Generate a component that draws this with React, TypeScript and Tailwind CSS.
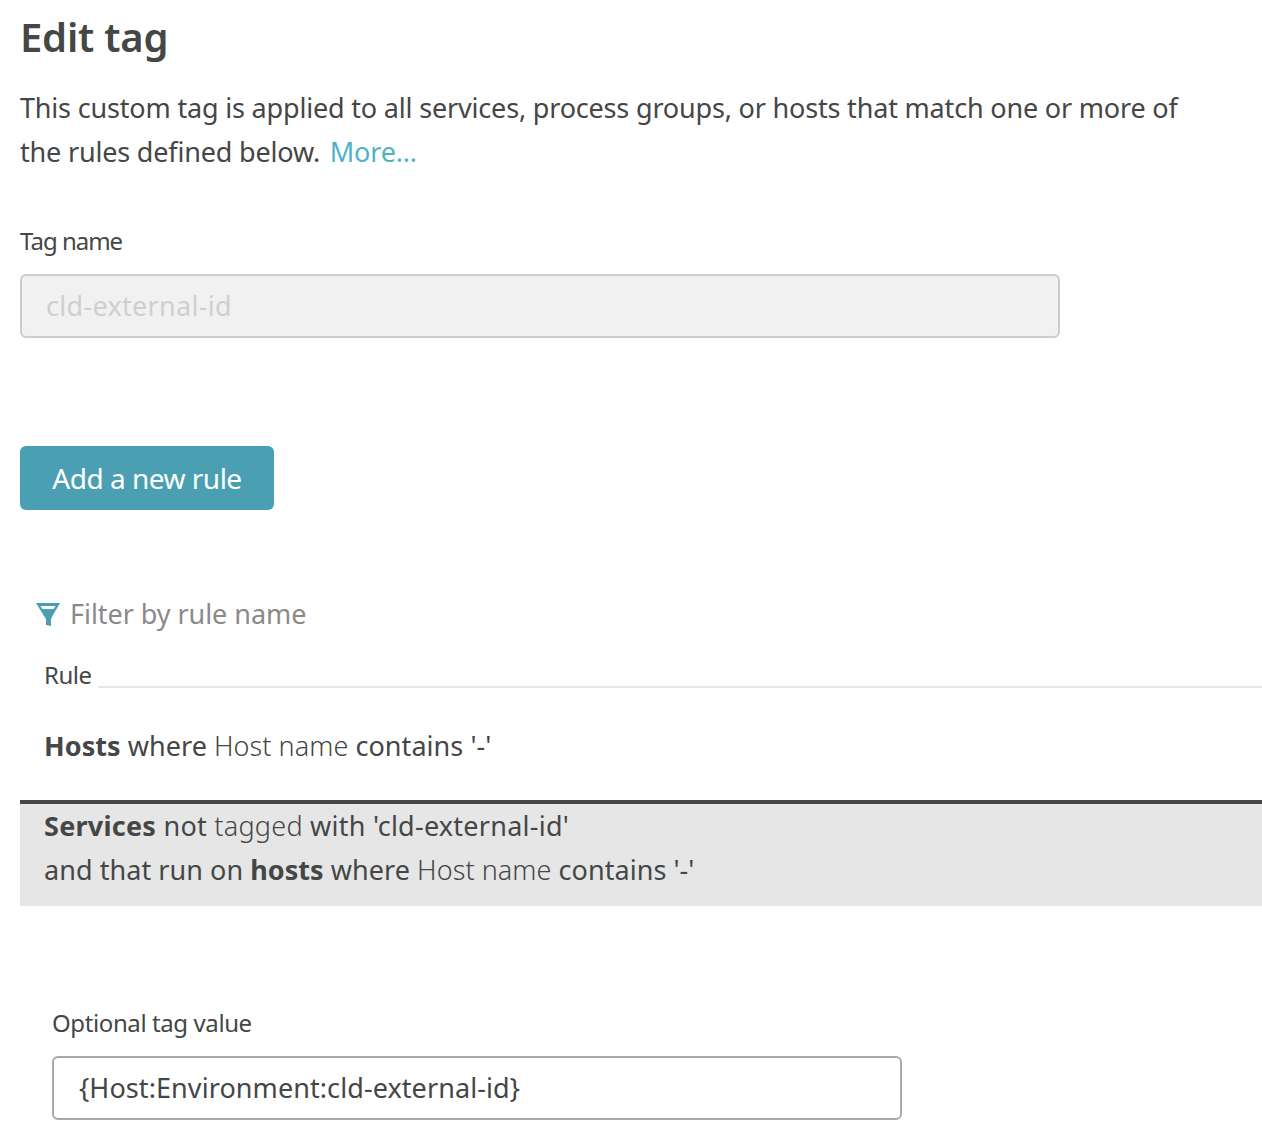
const font = "font-['Noto_Sans','Open_Sans',sans-serif]";

function FilterIcon() {
  return (
    <svg width="24" height="23" viewBox="0 0 24 23" className="shrink-0">
      <path
        fillRule="evenodd"
        fill="#4a9fb3"
        d="M0 0H24L16.5 13Q15 15 15 17V23L10 22V17Q10 15 8 13ZM4.5 3L6.5 6H17.5L19.5 3Z"
      />
    </svg>
  );
}

export default function App() {
  return (
    <div className={`${font} w-[1262px] h-[1148px] bg-white text-[#454646] overflow-hidden`}>
      <div className="pl-5">
        <h1 className="text-[40px] leading-[52px] font-semibold pt-[11px] tracking-[-0.2px]">Edit tag</h1>
        <p className="mt-[23px] w-[1190px] text-[27px] leading-[44px] tracking-[-0.18px]">
          This custom tag is applied to all services, process groups, or hosts that match one or more of the rules
          defined below. <span className="ml-[3px] text-[#4fb3c8]">More...</span>
        </p>

        <label className="block mt-[51px] text-[24px] leading-[32px] tracking-[-1px]">Tag name</label>
        <div className="mt-[17px] w-[1040px] h-16 flex items-center pl-[24px] bg-[#f1f1f1] border-2 border-[#cccccc] rounded-md text-[27px] text-[#cfcfcf] tracking-[0.3px]">
          cld-external-id
        </div>

        <button className="mt-[108px] block w-[254px] h-16 bg-[#4a9fb3] rounded-md text-white text-[28px] tracking-[-0.5px]">
          Add a new rule
        </button>

        <div className="mt-[88px] ml-4 flex items-center gap-[10px] h-8 text-[27px] text-[#8a8a8a] tracking-[-0.05px]">
          <FilterIcon />
          <span>Filter by rule name</span>
        </div>

        <div className="mt-[29px] flex items-end">
          <span className="pl-6 pr-[6px] text-[24px] leading-[32px] tracking-[-0.5px]">Rule</span>
          <div className="flex-1 h-0.5 bg-[#e6e6e6] mb-[3px]" />
        </div>

        <div className="pl-6 h-[109px] pt-[33px] text-[27px] leading-[44px] tracking-[0.05px]">
          <b className="font-bold">Hosts</b> where <span className="font-light">Host name</span> contains '-'
        </div>

        <div className="pl-6 h-[106px] bg-[#e6e6e6] border-t-4 border-[#454646] text-[27px] leading-[44px]">
          <div className="tracking-[0.25px]">
            <b className="font-bold">Services</b> not <span className="font-light">tagged</span> with 'cld-external-id'
          </div>
          <div className="tracking-[0.05px]">
            and that run on <b className="font-bold">hosts</b> where <span className="font-light">Host name</span> contains '-'
          </div>
        </div>

        <div className="pl-8">
          <label className="block mt-[101px] text-[24px] leading-[32px] tracking-[-0.4px]">Optional tag value</label>
          <div className="mt-[17px] w-[850px] h-16 flex items-center pl-[25px] bg-white border-2 border-[#a9a9a9] rounded-md text-[27px] tracking-[0.08px]">
            {'{Host:Environment:cld-external-id}'}
          </div>
        </div>
      </div>
    </div>
  );
}
